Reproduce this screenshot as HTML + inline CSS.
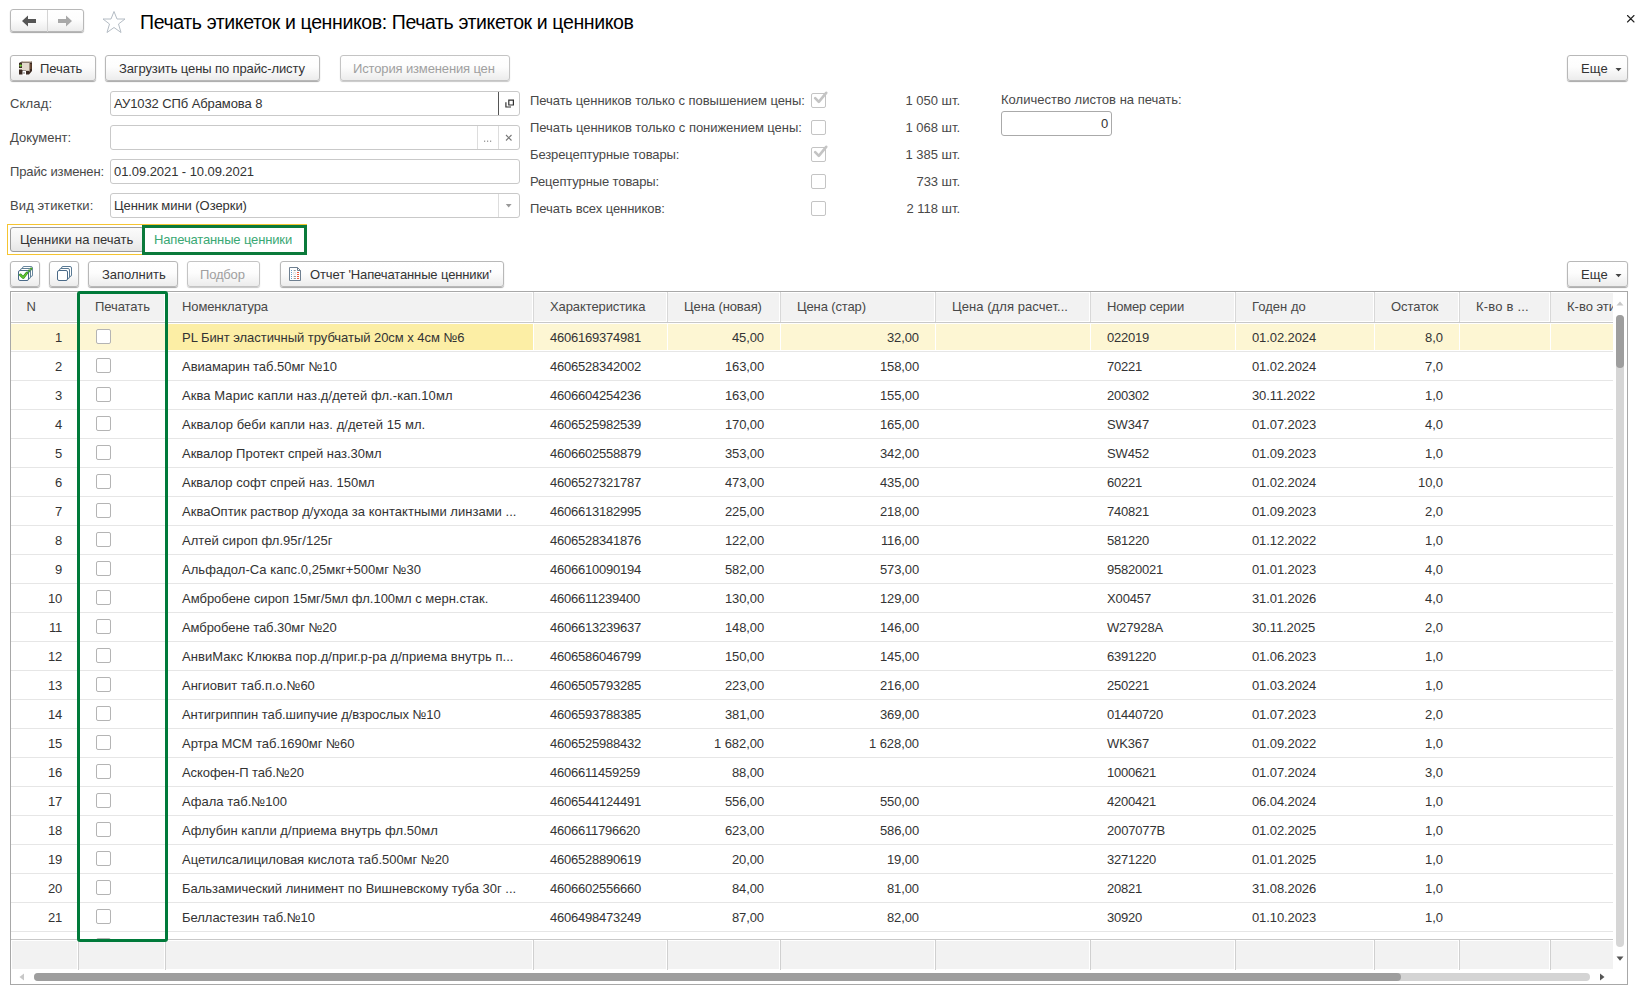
<!DOCTYPE html><html><head><meta charset="utf-8"><style>
html,body{margin:0;padding:0;}
body{width:1635px;height:991px;overflow:hidden;background:#fff;position:relative;font-family:"Liberation Sans",sans-serif;}
.t{position:absolute;white-space:nowrap;}
.b{position:absolute;box-sizing:border-box;}
.btn{position:absolute;box-sizing:border-box;border:1px solid #b8b8b8;border-radius:3px;background:linear-gradient(#ffffff 0%,#fdfdfd 45%,#ececec 100%);box-shadow:0 1px 1px rgba(0,0,0,0.35);}
.dis{border-color:#c4c4c4;box-shadow:0 1px 1px rgba(0,0,0,0.22);}
.inp{position:absolute;box-sizing:border-box;border:1px solid #c9c9c9;border-radius:3px;background:#fff;}
svg{position:absolute;}
</style></head><body>

<div class="btn" style="left:10px;top:9px;width:74px;height:23px"></div>
<div class="b" style="left:47px;top:10px;width:1px;height:22px;background:#d4d4d4"></div>
<svg style="left:20px;top:14px" width="18" height="14" viewBox="0 0 18 14"><path d="M2 7 L8 1.5 L8 5 L16 5 L16 9 L8 9 L8 12.5 Z" fill="#555"/></svg>
<svg style="left:56px;top:14px" width="18" height="14" viewBox="0 0 18 14"><path d="M16 7 L10 1.5 L10 5 L2 5 L2 9 L10 9 L10 12.5 Z" fill="#a8a8a8"/></svg>
<svg style="left:101px;top:10px" width="26" height="24" viewBox="0 0 26 24"><path d="M13 1.5 L16 9 L24 9 L17.5 14 L20 22.5 L13 17.5 L6 22.5 L8.5 14 L2 9 L10 9 Z" fill="none" stroke="#b4bcc4" stroke-width="1" stroke-linejoin="miter"/></svg>
<div class="t" style="left:140px;top:11px;font-size:19.5px;line-height:22px;color:#000;letter-spacing:-0.38px">Печать этикеток и ценников: Печать этикеток и ценников</div>
<svg style="left:1625px;top:13px" width="11" height="11" viewBox="0 0 11 11"><path d="M2.5 2.5 L9 9 M9 2.5 L2.5 9" stroke="#222" stroke-width="1.1" stroke-linecap="round"/></svg>
<div class="btn" style="left:10px;top:55px;width:86px;height:26px"></div>
<svg style="left:18px;top:60px" width="16" height="17" viewBox="0 0 16 17"><path d="M1 3 L4 1.5 L14 1.5 L14 11 L11 14.5 L1 14.5 Z" fill="#3b2a22"/><path d="M3 2.5 L5 1 L13 1 L14 2.5 Z" fill="#cfc4b6"/><rect x="4" y="3" width="7" height="7" fill="#e3d9cc"/><rect x="11" y="2.5" width="1" height="9" fill="#9a8a7a"/><rect x="12" y="4" width="1.5" height="5" fill="#6b4a35"/><circle cx="2.6" cy="5.6" r="1.2" fill="#72d43c"/><rect x="1" y="8" width="3" height="1.5" fill="#efe8dd"/><rect x="4.5" y="10.5" width="3.5" height="5" fill="#fff"/><rect x="5" y="12.5" width="2" height="1" fill="#777"/><rect x="8" y="10" width="3" height="1" fill="#c9bfb2"/></svg>
<div class="t" style="left:40px;top:61px;font-size:13px;line-height:15px;color:#333;letter-spacing:-0.051px;">Печать</div>
<div class="btn" style="left:105px;top:55px;width:215px;height:26px"></div>
<div class="t" style="left:119px;top:61px;font-size:13px;line-height:15px;color:#333;letter-spacing:-0.110px;">Загрузить цены по прайс-листу</div>
<div class="btn dis" style="left:340px;top:55px;width:170px;height:26px"></div>
<div class="t" style="left:353px;top:61px;font-size:13px;line-height:15px;color:#a0a0a0;letter-spacing:-0.139px;">История изменения цен</div>
<div class="btn" style="left:1567px;top:55px;width:61px;height:26px"></div>
<div class="t" style="left:1581px;top:61px;font-size:13px;line-height:15px;color:#333;letter-spacing:0.134px;">Еще</div>
<svg style="left:1615px;top:67px" width="7" height="5" viewBox="0 0 7 5"><path d="M0.5 1 L6.5 1 L3.5 4.2 Z" fill="#444"/></svg>
<div class="t" style="left:10px;top:96px;font-size:13px;line-height:15px;color:#484848;letter-spacing:0.152px;">Склад:</div>
<div class="inp" style="left:110px;top:91px;width:410px;height:25px"></div>
<div class="b" style="left:498px;top:92px;width:1px;height:23px;background:#555"></div>
<div class="t" style="left:114px;top:96px;font-size:13px;line-height:15px;color:#333;letter-spacing:-0.094px;">АУ1032 СПб Абрамова 8</div>
<svg style="left:503px;top:97px" width="14" height="14" viewBox="0 0 14 14"><path d="M5.8 3.1 H10.4 V8 H5.8 Z M2.9 5.2 V10 H8" fill="none" stroke="#333" stroke-width="1.2"/></svg>
<div class="t" style="left:10px;top:130px;font-size:13px;line-height:15px;color:#484848;letter-spacing:-0.015px;">Документ:</div>
<div class="inp" style="left:110px;top:125px;width:410px;height:25px"></div>
<div class="b" style="left:477px;top:126px;width:1px;height:23px;background:#ddd"></div>
<div class="b" style="left:498px;top:126px;width:1px;height:23px;background:#ddd"></div>
<svg style="left:480px;top:136px" width="14" height="8" viewBox="0 0 14 8"><rect x="4" y="4.6" width="1.2" height="1.2" fill="#888"/><rect x="7" y="4.6" width="1.2" height="1.2" fill="#888"/><rect x="10" y="4.6" width="1.2" height="1.2" fill="#888"/></svg>
<svg style="left:503px;top:132px" width="11" height="11" viewBox="0 0 11 11"><path d="M3 3 L8.5 8.5 M8.5 3 L3 8.5" stroke="#777" stroke-width="1.1"/></svg>
<div class="t" style="left:10px;top:164px;font-size:13px;line-height:15px;color:#484848;letter-spacing:-0.126px;">Прайс изменен:</div>
<div class="inp" style="left:110px;top:159px;width:410px;height:25px"></div>
<div class="t" style="left:114px;top:164px;font-size:13px;line-height:15px;color:#333;letter-spacing:-0.073px;">01.09.2021 - 10.09.2021</div>
<div class="t" style="left:10px;top:198px;font-size:13px;line-height:15px;color:#484848;letter-spacing:0.122px;">Вид этикетки:</div>
<div class="inp" style="left:110px;top:193px;width:410px;height:25px"></div>
<div class="b" style="left:498px;top:194px;width:1px;height:23px;background:#ddd"></div>
<div class="t" style="left:114px;top:198px;font-size:13px;line-height:15px;color:#333;letter-spacing:-0.058px;">Ценник мини (Озерки)</div>
<svg style="left:504px;top:203px" width="9" height="6" viewBox="0 0 9 6"><path d="M1.8 1 L7.6 1 L4.7 4.4 Z" fill="#999"/></svg>
<div class="t" style="left:530px;top:93px;font-size:13px;line-height:15px;color:#484848;letter-spacing:-0.050px;">Печать ценников только с повышением цены:</div>
<div class="b" style="left:811px;top:93px;width:15px;height:15px;border:1px solid #c4c4c4;border-radius:2px;background:#fff"></div>
<svg style="left:812px;top:90px" width="16" height="16" viewBox="0 0 16 16"><path d="M3.2 8.2 L6.8 11.8 L14.2 2.8" fill="none" stroke="#c4c4c4" stroke-width="2.6" stroke-linecap="round" stroke-linejoin="round"/></svg>
<div class="t" style="right:675px;top:93px;font-size:13px;line-height:15px;color:#484848;text-align:right;letter-spacing:-0.015px;">1 050 шт.</div>
<div class="t" style="left:530px;top:120px;font-size:13px;line-height:15px;color:#484848;letter-spacing:-0.037px;">Печать ценников только с понижением цены:</div>
<div class="b" style="left:811px;top:120px;width:15px;height:15px;border:1px solid #c4c4c4;border-radius:2px;background:#fff"></div>
<div class="t" style="right:675px;top:120px;font-size:13px;line-height:15px;color:#484848;text-align:right;letter-spacing:-0.015px;">1 068 шт.</div>
<div class="t" style="left:530px;top:147px;font-size:13px;line-height:15px;color:#484848;letter-spacing:-0.111px;">Безрецептурные товары:</div>
<div class="b" style="left:811px;top:147px;width:15px;height:15px;border:1px solid #c4c4c4;border-radius:2px;background:#fff"></div>
<svg style="left:812px;top:144px" width="16" height="16" viewBox="0 0 16 16"><path d="M3.2 8.2 L6.8 11.8 L14.2 2.8" fill="none" stroke="#c4c4c4" stroke-width="2.6" stroke-linecap="round" stroke-linejoin="round"/></svg>
<div class="t" style="right:675px;top:147px;font-size:13px;line-height:15px;color:#484848;text-align:right;letter-spacing:-0.015px;">1 385 шт.</div>
<div class="t" style="left:530px;top:174px;font-size:13px;line-height:15px;color:#484848;letter-spacing:-0.114px;">Рецептурные товары:</div>
<div class="b" style="left:811px;top:174px;width:15px;height:15px;border:1px solid #c4c4c4;border-radius:2px;background:#fff"></div>
<div class="t" style="right:675px;top:174px;font-size:13px;line-height:15px;color:#484848;text-align:right;letter-spacing:-0.042px;">733 шт.</div>
<div class="t" style="left:530px;top:201px;font-size:13px;line-height:15px;color:#484848;letter-spacing:-0.066px;">Печать всех ценников:</div>
<div class="b" style="left:811px;top:201px;width:15px;height:15px;border:1px solid #c4c4c4;border-radius:2px;background:#fff"></div>
<div class="t" style="right:675px;top:201px;font-size:13px;line-height:15px;color:#484848;text-align:right;letter-spacing:-0.015px;">2 118 шт.</div>
<div class="t" style="left:1001px;top:92px;font-size:13px;line-height:15px;color:#484848;letter-spacing:0.017px;">Количество листов на печать:</div>
<div class="inp" style="left:1001px;top:111px;width:111px;height:25px;border-color:#aaa"></div>
<div class="t" style="right:527px;top:116px;font-size:13px;line-height:15px;color:#333;text-align:right;letter-spacing:-0.230px;">0</div>
<div class="b" style="left:7px;top:224px;width:300px;height:31px;border:1px solid #f5c431"></div>
<div class="b" style="left:10px;top:227px;width:134px;height:25px;border:1px solid #9c9c9c;border-radius:3px;background:linear-gradient(#fbfbfb,#f3f3f3 50%,#e6e6e6)"></div>
<div class="t" style="left:20px;top:232px;font-size:13px;line-height:15px;color:#333;letter-spacing:-0.003px;">Ценники на печать</div>
<div class="b" style="left:142px;top:225px;width:165px;height:30px;border:3px solid #0b7a3b;background:#fff"></div>
<div class="t" style="left:154px;top:232px;font-size:13px;line-height:15px;color:#3aa874;letter-spacing:-0.143px;">Напечатанные ценники</div>
<div class="btn" style="left:10px;top:261px;width:30px;height:26px"></div>
<svg style="left:14px;top:262px" width="24" height="24" viewBox="0 0 24 24"><rect x="8.5" y="4.5" width="10" height="10" rx="1.5" fill="#fff" stroke="#6a889e"/><path d="M10.3 8.8 L13.2 11.6 L17.0 6.800000000000001" fill="none" stroke="#2f8f1c" stroke-width="2.6" stroke-linecap="round" stroke-linejoin="round"/><path d="M10.3 8.8 L13.2 11.6 L17.0 6.800000000000001" fill="none" stroke="#6ccc34" stroke-width="1.2" stroke-linecap="round" stroke-linejoin="round"/><rect x="6.5" y="6.5" width="10" height="10" rx="1.5" fill="#fff" stroke="#5f7f96"/><path d="M8.3 10.8 L11.2 13.6 L15.0 8.8" fill="none" stroke="#2f8f1c" stroke-width="2.6" stroke-linecap="round" stroke-linejoin="round"/><path d="M8.3 10.8 L11.2 13.6 L15.0 8.8" fill="none" stroke="#6ccc34" stroke-width="1.2" stroke-linecap="round" stroke-linejoin="round"/><rect x="4.5" y="8.5" width="10" height="10" rx="1.5" fill="#fff" stroke="#4a6a88"/><path d="M6.3 12.8 L9.2 15.6 L13.0 10.8" fill="none" stroke="#2f8f1c" stroke-width="2.6" stroke-linecap="round" stroke-linejoin="round"/><path d="M6.3 12.8 L9.2 15.6 L13.0 10.8" fill="none" stroke="#6ccc34" stroke-width="1.2" stroke-linecap="round" stroke-linejoin="round"/></svg>
<div class="btn" style="left:49px;top:261px;width:30px;height:26px"></div>
<svg style="left:53px;top:262px" width="24" height="24" viewBox="0 0 24 24"><rect x="8.5" y="4.5" width="10" height="10" rx="1.5" fill="#fff" stroke="#5a7a94"/><rect x="6.5" y="6.5" width="10" height="10" rx="1.5" fill="#fff" stroke="#5a7a94"/><rect x="4.5" y="8.5" width="10" height="10" rx="1.5" fill="#fff" stroke="#4a6a88"/></svg>
<div class="btn" style="left:88px;top:261px;width:90px;height:26px"></div>
<div class="t" style="left:102px;top:267px;font-size:13px;line-height:15px;color:#333;letter-spacing:-0.012px;">Заполнить</div>
<div class="btn dis" style="left:187px;top:261px;width:73px;height:26px"></div>
<div class="t" style="left:200px;top:267px;font-size:13px;line-height:15px;color:#a0a0a0;letter-spacing:-0.177px;">Подбор</div>
<div class="btn" style="left:280px;top:261px;width:224px;height:26px"></div>
<svg style="left:284px;top:262px" width="22" height="24" viewBox="0 0 22 24"><path d="M5.5 5.5 H13.5 L16.5 8.5 V18.5 H5.5 Z" fill="#fff" stroke="#6e7f90"/><path d="M13.5 5.5 V8.5 H16.5" fill="none" stroke="#6e7f90"/><g fill="#6aa0c8"><rect x="7" y="8" width="1" height="1"/><rect x="7" y="10" width="1" height="1"/><rect x="7" y="12" width="1" height="1"/><rect x="7" y="14" width="1" height="1"/><rect x="7" y="16" width="1" height="1"/></g><g fill="#999"><rect x="9.7" y="8" width="2" height="1"/><rect x="9.7" y="14" width="2.2" height="1"/><rect x="9.7" y="16" width="2.2" height="1"/></g><circle cx="10.5" cy="11.4" r="1.2" fill="none" stroke="#ccc" stroke-width="0.6"/><g fill="#f05a3c"><rect x="13" y="10" width="2" height="1"/><rect x="13" y="12" width="2" height="1"/><rect x="13" y="14" width="2" height="1"/><rect x="13" y="16" width="2" height="1"/></g></svg>
<div class="t" style="left:310px;top:267px;font-size:13px;line-height:15px;color:#333;letter-spacing:-0.124px;">Отчет 'Напечатанные ценники'</div>
<div class="btn" style="left:1567px;top:261px;width:61px;height:26px"></div>
<div class="t" style="left:1581px;top:267px;font-size:13px;line-height:15px;color:#333;letter-spacing:0.134px;">Еще</div>
<svg style="left:1615px;top:273px" width="7" height="5" viewBox="0 0 7 5"><path d="M0.5 1 L6.5 1 L3.5 4.2 Z" fill="#444"/></svg>
<div class="b" style="left:10px;top:291px;width:1618px;height:694px;border:1px solid #a8a8a8;background:#fff"></div>
<div class="b" style="left:11px;top:292px;width:1602px;height:30px;background:#fff"></div>
<div class="b" style="left:12px;top:293px;width:65px;height:28px;background:#f2f2f2"></div>
<div class="b" style="left:79px;top:293px;width:85px;height:28px;background:#f2f2f2"></div>
<div class="b" style="left:166px;top:293px;width:366px;height:28px;background:#f2f2f2"></div>
<div class="b" style="left:534px;top:293px;width:132px;height:28px;background:#f2f2f2"></div>
<div class="b" style="left:668px;top:293px;width:111px;height:28px;background:#f2f2f2"></div>
<div class="b" style="left:781px;top:293px;width:153px;height:28px;background:#f2f2f2"></div>
<div class="b" style="left:936px;top:293px;width:153px;height:28px;background:#f2f2f2"></div>
<div class="b" style="left:1091px;top:293px;width:143px;height:28px;background:#f2f2f2"></div>
<div class="b" style="left:1236px;top:293px;width:137px;height:28px;background:#f2f2f2"></div>
<div class="b" style="left:1375px;top:293px;width:83px;height:28px;background:#f2f2f2"></div>
<div class="b" style="left:1460px;top:293px;width:89px;height:28px;background:#f2f2f2"></div>
<div class="b" style="left:1551px;top:293px;width:62px;height:28px;background:#f2f2f2"></div>
<div class="b" style="left:11px;top:322px;width:1602px;height:1px;background:#c8c8c8"></div>
<div class="b" style="left:78px;top:292px;width:1px;height:30px;background:#d8d8d8"></div>
<div class="b" style="left:165px;top:292px;width:1px;height:30px;background:#d8d8d8"></div>
<div class="b" style="left:533px;top:292px;width:1px;height:30px;background:#d8d8d8"></div>
<div class="b" style="left:667px;top:292px;width:1px;height:30px;background:#d8d8d8"></div>
<div class="b" style="left:780px;top:292px;width:1px;height:30px;background:#d8d8d8"></div>
<div class="b" style="left:935px;top:292px;width:1px;height:30px;background:#d8d8d8"></div>
<div class="b" style="left:1090px;top:292px;width:1px;height:30px;background:#d8d8d8"></div>
<div class="b" style="left:1235px;top:292px;width:1px;height:30px;background:#d8d8d8"></div>
<div class="b" style="left:1374px;top:292px;width:1px;height:30px;background:#d8d8d8"></div>
<div class="b" style="left:1459px;top:292px;width:1px;height:30px;background:#d8d8d8"></div>
<div class="b" style="left:1550px;top:292px;width:1px;height:30px;background:#d8d8d8"></div>
<div class="t" style="left:-169px;width:400px;text-align:center;top:299px;font-size:13px;line-height:15px;color:#484848;letter-spacing:-0.388px;">N</div>
<div class="t" style="left:95px;top:299px;font-size:13px;line-height:15px;color:#484848;letter-spacing:-0.061px;">Печатать</div>
<div class="t" style="left:182px;top:299px;font-size:13px;line-height:15px;color:#484848;letter-spacing:-0.115px;">Номенклатура</div>
<div class="t" style="left:550px;top:299px;font-size:13px;line-height:15px;color:#484848;letter-spacing:-0.097px;">Характеристика</div>
<div class="t" style="left:684px;top:299px;font-size:13px;line-height:15px;color:#484848;letter-spacing:-0.093px;">Цена (новая)</div>
<div class="t" style="left:797px;top:299px;font-size:13px;line-height:15px;color:#484848;letter-spacing:-0.131px;">Цена (стар)</div>
<div class="t" style="left:952px;top:299px;font-size:13px;line-height:15px;color:#484848;letter-spacing:0.065px;">Цена (для расчет...</div>
<div class="t" style="left:1107px;top:299px;font-size:13px;line-height:15px;color:#484848;letter-spacing:-0.192px;">Номер серии</div>
<div class="t" style="left:1252px;top:299px;font-size:13px;line-height:15px;color:#484848;letter-spacing:0.039px;">Годен до</div>
<div class="t" style="left:1391px;top:299px;font-size:13px;line-height:15px;color:#484848;letter-spacing:-0.095px;">Остаток</div>
<div class="t" style="left:1476px;top:299px;font-size:13px;line-height:15px;color:#484848;letter-spacing:0.200px;">К-во в ...</div>
<div class="t" style="left:1567px;top:299px;width:46px;overflow:hidden;font-size:13px;line-height:15px;color:#484848">К-во этикеток</div>
<div class="b" style="left:11px;top:323px;width:1602px;height:616px;overflow:hidden">
<div class="b" style="left:0;top:1px;width:1602px;height:26px;background:#fdf6d3"></div>
<div class="b" style="left:155px;top:1px;width:367px;height:26px;background:#fceea5"></div>
<div class="b" style="left:67px;top:0px;width:1px;height:28px;background:#fff"></div>
<div class="b" style="left:154px;top:0px;width:1px;height:28px;background:#fff"></div>
<div class="b" style="left:522px;top:0px;width:1px;height:28px;background:#fff"></div>
<div class="b" style="left:656px;top:0px;width:1px;height:28px;background:#fff"></div>
<div class="b" style="left:769px;top:0px;width:1px;height:28px;background:#fff"></div>
<div class="b" style="left:924px;top:0px;width:1px;height:28px;background:#fff"></div>
<div class="b" style="left:1079px;top:0px;width:1px;height:28px;background:#fff"></div>
<div class="b" style="left:1224px;top:0px;width:1px;height:28px;background:#fff"></div>
<div class="b" style="left:1363px;top:0px;width:1px;height:28px;background:#fff"></div>
<div class="b" style="left:1448px;top:0px;width:1px;height:28px;background:#fff"></div>
<div class="b" style="left:1539px;top:0px;width:1px;height:28px;background:#fff"></div>
<div class="b" style="left:0;top:28px;width:1602px;height:1px;background:#e6e6e6"></div>
<div class="b" style="left:85px;top:6px;width:15px;height:15px;border:1px solid #b4b4b4;border-radius:2px;background:#fff"></div>
<div class="b" style="left:0;top:57px;width:1602px;height:1px;background:#e6e6e6"></div>
<div class="b" style="left:85px;top:35px;width:15px;height:15px;border:1px solid #b4b4b4;border-radius:2px;background:#fff"></div>
<div class="b" style="left:0;top:86px;width:1602px;height:1px;background:#e6e6e6"></div>
<div class="b" style="left:85px;top:64px;width:15px;height:15px;border:1px solid #b4b4b4;border-radius:2px;background:#fff"></div>
<div class="b" style="left:0;top:115px;width:1602px;height:1px;background:#e6e6e6"></div>
<div class="b" style="left:85px;top:93px;width:15px;height:15px;border:1px solid #b4b4b4;border-radius:2px;background:#fff"></div>
<div class="b" style="left:0;top:144px;width:1602px;height:1px;background:#e6e6e6"></div>
<div class="b" style="left:85px;top:122px;width:15px;height:15px;border:1px solid #b4b4b4;border-radius:2px;background:#fff"></div>
<div class="b" style="left:0;top:173px;width:1602px;height:1px;background:#e6e6e6"></div>
<div class="b" style="left:85px;top:151px;width:15px;height:15px;border:1px solid #b4b4b4;border-radius:2px;background:#fff"></div>
<div class="b" style="left:0;top:202px;width:1602px;height:1px;background:#e6e6e6"></div>
<div class="b" style="left:85px;top:180px;width:15px;height:15px;border:1px solid #b4b4b4;border-radius:2px;background:#fff"></div>
<div class="b" style="left:0;top:231px;width:1602px;height:1px;background:#e6e6e6"></div>
<div class="b" style="left:85px;top:209px;width:15px;height:15px;border:1px solid #b4b4b4;border-radius:2px;background:#fff"></div>
<div class="b" style="left:0;top:260px;width:1602px;height:1px;background:#e6e6e6"></div>
<div class="b" style="left:85px;top:238px;width:15px;height:15px;border:1px solid #b4b4b4;border-radius:2px;background:#fff"></div>
<div class="b" style="left:0;top:289px;width:1602px;height:1px;background:#e6e6e6"></div>
<div class="b" style="left:85px;top:267px;width:15px;height:15px;border:1px solid #b4b4b4;border-radius:2px;background:#fff"></div>
<div class="b" style="left:0;top:318px;width:1602px;height:1px;background:#e6e6e6"></div>
<div class="b" style="left:85px;top:296px;width:15px;height:15px;border:1px solid #b4b4b4;border-radius:2px;background:#fff"></div>
<div class="b" style="left:0;top:347px;width:1602px;height:1px;background:#e6e6e6"></div>
<div class="b" style="left:85px;top:325px;width:15px;height:15px;border:1px solid #b4b4b4;border-radius:2px;background:#fff"></div>
<div class="b" style="left:0;top:376px;width:1602px;height:1px;background:#e6e6e6"></div>
<div class="b" style="left:85px;top:354px;width:15px;height:15px;border:1px solid #b4b4b4;border-radius:2px;background:#fff"></div>
<div class="b" style="left:0;top:405px;width:1602px;height:1px;background:#e6e6e6"></div>
<div class="b" style="left:85px;top:383px;width:15px;height:15px;border:1px solid #b4b4b4;border-radius:2px;background:#fff"></div>
<div class="b" style="left:0;top:434px;width:1602px;height:1px;background:#e6e6e6"></div>
<div class="b" style="left:85px;top:412px;width:15px;height:15px;border:1px solid #b4b4b4;border-radius:2px;background:#fff"></div>
<div class="b" style="left:0;top:463px;width:1602px;height:1px;background:#e6e6e6"></div>
<div class="b" style="left:85px;top:441px;width:15px;height:15px;border:1px solid #b4b4b4;border-radius:2px;background:#fff"></div>
<div class="b" style="left:0;top:492px;width:1602px;height:1px;background:#e6e6e6"></div>
<div class="b" style="left:85px;top:470px;width:15px;height:15px;border:1px solid #b4b4b4;border-radius:2px;background:#fff"></div>
<div class="b" style="left:0;top:521px;width:1602px;height:1px;background:#e6e6e6"></div>
<div class="b" style="left:85px;top:499px;width:15px;height:15px;border:1px solid #b4b4b4;border-radius:2px;background:#fff"></div>
<div class="b" style="left:0;top:550px;width:1602px;height:1px;background:#e6e6e6"></div>
<div class="b" style="left:85px;top:528px;width:15px;height:15px;border:1px solid #b4b4b4;border-radius:2px;background:#fff"></div>
<div class="b" style="left:0;top:579px;width:1602px;height:1px;background:#e6e6e6"></div>
<div class="b" style="left:85px;top:557px;width:15px;height:15px;border:1px solid #b4b4b4;border-radius:2px;background:#fff"></div>
<div class="b" style="left:0;top:608px;width:1602px;height:1px;background:#e6e6e6"></div>
<div class="b" style="left:85px;top:586px;width:15px;height:15px;border:1px solid #b4b4b4;border-radius:2px;background:#fff"></div>
<div class="b" style="left:0;top:637px;width:1602px;height:1px;background:#e6e6e6"></div>
<div class="b" style="left:85px;top:615px;width:15px;height:15px;border:1px solid #b4b4b4;border-radius:2px;background:#fff"></div>
</div>
<div class="t" style="right:1573px;top:330px;font-size:13px;line-height:15px;color:#333;text-align:right;letter-spacing:-0.230px;">1</div>
<div class="t" style="left:182px;top:330px;font-size:13px;line-height:15px;color:#333;letter-spacing:-0.042px;">PL Бинт эластичный трубчатый 20см х 4см №6</div>
<div class="t" style="left:550px;top:330px;font-size:13px;line-height:15px;color:#333;letter-spacing:-0.230px;">4606169374981</div>
<div class="t" style="right:871px;top:330px;font-size:13px;line-height:15px;color:#333;text-align:right;letter-spacing:-0.106px;">45,00</div>
<div class="t" style="right:716px;top:330px;font-size:13px;line-height:15px;color:#333;text-align:right;letter-spacing:-0.106px;">32,00</div>
<div class="t" style="left:1107px;top:330px;font-size:13px;line-height:15px;color:#333;letter-spacing:-0.230px;">022019</div>
<div class="t" style="left:1252px;top:330px;font-size:13px;line-height:15px;color:#333;letter-spacing:-0.106px;">01.02.2024</div>
<div class="t" style="right:192px;top:330px;font-size:13px;line-height:15px;color:#333;text-align:right;letter-spacing:-0.024px;">8,0</div>
<div class="t" style="right:1573px;top:359px;font-size:13px;line-height:15px;color:#333;text-align:right;letter-spacing:-0.230px;">2</div>
<div class="t" style="left:182px;top:359px;font-size:13px;line-height:15px;color:#333;letter-spacing:-0.042px;">Авиамарин таб.50мг №10</div>
<div class="t" style="left:550px;top:359px;font-size:13px;line-height:15px;color:#333;letter-spacing:-0.230px;">4606528342002</div>
<div class="t" style="right:871px;top:359px;font-size:13px;line-height:15px;color:#333;text-align:right;letter-spacing:-0.127px;">163,00</div>
<div class="t" style="right:716px;top:359px;font-size:13px;line-height:15px;color:#333;text-align:right;letter-spacing:-0.127px;">158,00</div>
<div class="t" style="left:1107px;top:359px;font-size:13px;line-height:15px;color:#333;letter-spacing:-0.230px;">70221</div>
<div class="t" style="left:1252px;top:359px;font-size:13px;line-height:15px;color:#333;letter-spacing:-0.106px;">01.02.2024</div>
<div class="t" style="right:192px;top:359px;font-size:13px;line-height:15px;color:#333;text-align:right;letter-spacing:-0.024px;">7,0</div>
<div class="t" style="right:1573px;top:388px;font-size:13px;line-height:15px;color:#333;text-align:right;letter-spacing:-0.230px;">3</div>
<div class="t" style="left:182px;top:388px;font-size:13px;line-height:15px;color:#333;letter-spacing:0.073px;">Аква Марис капли наз.д/детей фл.-кап.10мл</div>
<div class="t" style="left:550px;top:388px;font-size:13px;line-height:15px;color:#333;letter-spacing:-0.230px;">4606604254236</div>
<div class="t" style="right:871px;top:388px;font-size:13px;line-height:15px;color:#333;text-align:right;letter-spacing:-0.127px;">163,00</div>
<div class="t" style="right:716px;top:388px;font-size:13px;line-height:15px;color:#333;text-align:right;letter-spacing:-0.127px;">155,00</div>
<div class="t" style="left:1107px;top:388px;font-size:13px;line-height:15px;color:#333;letter-spacing:-0.230px;">200302</div>
<div class="t" style="left:1252px;top:388px;font-size:13px;line-height:15px;color:#333;letter-spacing:-0.106px;">30.11.2022</div>
<div class="t" style="right:192px;top:388px;font-size:13px;line-height:15px;color:#333;text-align:right;letter-spacing:-0.024px;">1,0</div>
<div class="t" style="right:1573px;top:417px;font-size:13px;line-height:15px;color:#333;text-align:right;letter-spacing:-0.230px;">4</div>
<div class="t" style="left:182px;top:417px;font-size:13px;line-height:15px;color:#333;letter-spacing:0.068px;">Аквалор беби капли наз. д/детей 15 мл.</div>
<div class="t" style="left:550px;top:417px;font-size:13px;line-height:15px;color:#333;letter-spacing:-0.230px;">4606525982539</div>
<div class="t" style="right:871px;top:417px;font-size:13px;line-height:15px;color:#333;text-align:right;letter-spacing:-0.127px;">170,00</div>
<div class="t" style="right:716px;top:417px;font-size:13px;line-height:15px;color:#333;text-align:right;letter-spacing:-0.127px;">165,00</div>
<div class="t" style="left:1107px;top:417px;font-size:13px;line-height:15px;color:#333;letter-spacing:-0.126px;">SW347</div>
<div class="t" style="left:1252px;top:417px;font-size:13px;line-height:15px;color:#333;letter-spacing:-0.106px;">01.07.2023</div>
<div class="t" style="right:192px;top:417px;font-size:13px;line-height:15px;color:#333;text-align:right;letter-spacing:-0.024px;">4,0</div>
<div class="t" style="right:1573px;top:446px;font-size:13px;line-height:15px;color:#333;text-align:right;letter-spacing:-0.230px;">5</div>
<div class="t" style="left:182px;top:446px;font-size:13px;line-height:15px;color:#333;letter-spacing:-0.008px;">Аквалор Протект спрей наз.30мл</div>
<div class="t" style="left:550px;top:446px;font-size:13px;line-height:15px;color:#333;letter-spacing:-0.230px;">4606602558879</div>
<div class="t" style="right:871px;top:446px;font-size:13px;line-height:15px;color:#333;text-align:right;letter-spacing:-0.127px;">353,00</div>
<div class="t" style="right:716px;top:446px;font-size:13px;line-height:15px;color:#333;text-align:right;letter-spacing:-0.127px;">342,00</div>
<div class="t" style="left:1107px;top:446px;font-size:13px;line-height:15px;color:#333;letter-spacing:-0.126px;">SW452</div>
<div class="t" style="left:1252px;top:446px;font-size:13px;line-height:15px;color:#333;letter-spacing:-0.106px;">01.09.2023</div>
<div class="t" style="right:192px;top:446px;font-size:13px;line-height:15px;color:#333;text-align:right;letter-spacing:-0.024px;">1,0</div>
<div class="t" style="right:1573px;top:475px;font-size:13px;line-height:15px;color:#333;text-align:right;letter-spacing:-0.230px;">6</div>
<div class="t" style="left:182px;top:475px;font-size:13px;line-height:15px;color:#333;letter-spacing:0.006px;">Аквалор софт спрей наз. 150мл</div>
<div class="t" style="left:550px;top:475px;font-size:13px;line-height:15px;color:#333;letter-spacing:-0.230px;">4606527321787</div>
<div class="t" style="right:871px;top:475px;font-size:13px;line-height:15px;color:#333;text-align:right;letter-spacing:-0.127px;">473,00</div>
<div class="t" style="right:716px;top:475px;font-size:13px;line-height:15px;color:#333;text-align:right;letter-spacing:-0.127px;">435,00</div>
<div class="t" style="left:1107px;top:475px;font-size:13px;line-height:15px;color:#333;letter-spacing:-0.230px;">60221</div>
<div class="t" style="left:1252px;top:475px;font-size:13px;line-height:15px;color:#333;letter-spacing:-0.106px;">01.02.2024</div>
<div class="t" style="right:192px;top:475px;font-size:13px;line-height:15px;color:#333;text-align:right;letter-spacing:-0.075px;">10,0</div>
<div class="t" style="right:1573px;top:504px;font-size:13px;line-height:15px;color:#333;text-align:right;letter-spacing:-0.230px;">7</div>
<div class="t" style="left:182px;top:504px;font-size:13px;line-height:15px;color:#333;letter-spacing:0.023px;">АкваОптик раствор д/ухода за контактными линзами ...</div>
<div class="t" style="left:550px;top:504px;font-size:13px;line-height:15px;color:#333;letter-spacing:-0.230px;">4606613182995</div>
<div class="t" style="right:871px;top:504px;font-size:13px;line-height:15px;color:#333;text-align:right;letter-spacing:-0.127px;">225,00</div>
<div class="t" style="right:716px;top:504px;font-size:13px;line-height:15px;color:#333;text-align:right;letter-spacing:-0.127px;">218,00</div>
<div class="t" style="left:1107px;top:504px;font-size:13px;line-height:15px;color:#333;letter-spacing:-0.230px;">740821</div>
<div class="t" style="left:1252px;top:504px;font-size:13px;line-height:15px;color:#333;letter-spacing:-0.106px;">01.09.2023</div>
<div class="t" style="right:192px;top:504px;font-size:13px;line-height:15px;color:#333;text-align:right;letter-spacing:-0.024px;">2,0</div>
<div class="t" style="right:1573px;top:533px;font-size:13px;line-height:15px;color:#333;text-align:right;letter-spacing:-0.230px;">8</div>
<div class="t" style="left:182px;top:533px;font-size:13px;line-height:15px;color:#333;letter-spacing:0.029px;">Алтей сироп фл.95г/125г</div>
<div class="t" style="left:550px;top:533px;font-size:13px;line-height:15px;color:#333;letter-spacing:-0.230px;">4606528341876</div>
<div class="t" style="right:871px;top:533px;font-size:13px;line-height:15px;color:#333;text-align:right;letter-spacing:-0.127px;">122,00</div>
<div class="t" style="right:716px;top:533px;font-size:13px;line-height:15px;color:#333;text-align:right;letter-spacing:-0.127px;">116,00</div>
<div class="t" style="left:1107px;top:533px;font-size:13px;line-height:15px;color:#333;letter-spacing:-0.230px;">581220</div>
<div class="t" style="left:1252px;top:533px;font-size:13px;line-height:15px;color:#333;letter-spacing:-0.106px;">01.12.2022</div>
<div class="t" style="right:192px;top:533px;font-size:13px;line-height:15px;color:#333;text-align:right;letter-spacing:-0.024px;">1,0</div>
<div class="t" style="right:1573px;top:562px;font-size:13px;line-height:15px;color:#333;text-align:right;letter-spacing:-0.230px;">9</div>
<div class="t" style="left:182px;top:562px;font-size:13px;line-height:15px;color:#333;letter-spacing:0.040px;">Альфадол-Са капс.0,25мкг+500мг №30</div>
<div class="t" style="left:550px;top:562px;font-size:13px;line-height:15px;color:#333;letter-spacing:-0.230px;">4606610090194</div>
<div class="t" style="right:871px;top:562px;font-size:13px;line-height:15px;color:#333;text-align:right;letter-spacing:-0.127px;">582,00</div>
<div class="t" style="right:716px;top:562px;font-size:13px;line-height:15px;color:#333;text-align:right;letter-spacing:-0.127px;">573,00</div>
<div class="t" style="left:1107px;top:562px;font-size:13px;line-height:15px;color:#333;letter-spacing:-0.230px;">95820021</div>
<div class="t" style="left:1252px;top:562px;font-size:13px;line-height:15px;color:#333;letter-spacing:-0.106px;">01.01.2023</div>
<div class="t" style="right:192px;top:562px;font-size:13px;line-height:15px;color:#333;text-align:right;letter-spacing:-0.024px;">4,0</div>
<div class="t" style="right:1573px;top:591px;font-size:13px;line-height:15px;color:#333;text-align:right;letter-spacing:-0.230px;">10</div>
<div class="t" style="left:182px;top:591px;font-size:13px;line-height:15px;color:#333;letter-spacing:-0.004px;">Амбробене сироп 15мг/5мл фл.100мл с мерн.стак.</div>
<div class="t" style="left:550px;top:591px;font-size:13px;line-height:15px;color:#333;letter-spacing:-0.230px;">4606611239400</div>
<div class="t" style="right:871px;top:591px;font-size:13px;line-height:15px;color:#333;text-align:right;letter-spacing:-0.127px;">130,00</div>
<div class="t" style="right:716px;top:591px;font-size:13px;line-height:15px;color:#333;text-align:right;letter-spacing:-0.127px;">129,00</div>
<div class="t" style="left:1107px;top:591px;font-size:13px;line-height:15px;color:#333;letter-spacing:-0.137px;">X00457</div>
<div class="t" style="left:1252px;top:591px;font-size:13px;line-height:15px;color:#333;letter-spacing:-0.106px;">31.01.2026</div>
<div class="t" style="right:192px;top:591px;font-size:13px;line-height:15px;color:#333;text-align:right;letter-spacing:-0.024px;">4,0</div>
<div class="t" style="right:1573px;top:620px;font-size:13px;line-height:15px;color:#333;text-align:right;letter-spacing:-0.230px;">11</div>
<div class="t" style="left:182px;top:620px;font-size:13px;line-height:15px;color:#333;letter-spacing:-0.073px;">Амбробене таб.30мг №20</div>
<div class="t" style="left:550px;top:620px;font-size:13px;line-height:15px;color:#333;letter-spacing:-0.230px;">4606613239637</div>
<div class="t" style="right:871px;top:620px;font-size:13px;line-height:15px;color:#333;text-align:right;letter-spacing:-0.127px;">148,00</div>
<div class="t" style="right:716px;top:620px;font-size:13px;line-height:15px;color:#333;text-align:right;letter-spacing:-0.127px;">146,00</div>
<div class="t" style="left:1107px;top:620px;font-size:13px;line-height:15px;color:#333;letter-spacing:-0.156px;">W27928A</div>
<div class="t" style="left:1252px;top:620px;font-size:13px;line-height:15px;color:#333;letter-spacing:-0.106px;">30.11.2025</div>
<div class="t" style="right:192px;top:620px;font-size:13px;line-height:15px;color:#333;text-align:right;letter-spacing:-0.024px;">2,0</div>
<div class="t" style="right:1573px;top:649px;font-size:13px;line-height:15px;color:#333;text-align:right;letter-spacing:-0.230px;">12</div>
<div class="t" style="left:182px;top:649px;font-size:13px;line-height:15px;color:#333;letter-spacing:0.061px;">АнвиМакс Клюква пор.д/приг.р-ра д/приема внутрь п...</div>
<div class="t" style="left:550px;top:649px;font-size:13px;line-height:15px;color:#333;letter-spacing:-0.230px;">4606586046799</div>
<div class="t" style="right:871px;top:649px;font-size:13px;line-height:15px;color:#333;text-align:right;letter-spacing:-0.127px;">150,00</div>
<div class="t" style="right:716px;top:649px;font-size:13px;line-height:15px;color:#333;text-align:right;letter-spacing:-0.127px;">145,00</div>
<div class="t" style="left:1107px;top:649px;font-size:13px;line-height:15px;color:#333;letter-spacing:-0.230px;">6391220</div>
<div class="t" style="left:1252px;top:649px;font-size:13px;line-height:15px;color:#333;letter-spacing:-0.106px;">01.06.2023</div>
<div class="t" style="right:192px;top:649px;font-size:13px;line-height:15px;color:#333;text-align:right;letter-spacing:-0.024px;">1,0</div>
<div class="t" style="right:1573px;top:678px;font-size:13px;line-height:15px;color:#333;text-align:right;letter-spacing:-0.230px;">13</div>
<div class="t" style="left:182px;top:678px;font-size:13px;line-height:15px;color:#333;letter-spacing:0.002px;">Ангиовит таб.п.о.№60</div>
<div class="t" style="left:550px;top:678px;font-size:13px;line-height:15px;color:#333;letter-spacing:-0.230px;">4606505793285</div>
<div class="t" style="right:871px;top:678px;font-size:13px;line-height:15px;color:#333;text-align:right;letter-spacing:-0.127px;">223,00</div>
<div class="t" style="right:716px;top:678px;font-size:13px;line-height:15px;color:#333;text-align:right;letter-spacing:-0.127px;">216,00</div>
<div class="t" style="left:1107px;top:678px;font-size:13px;line-height:15px;color:#333;letter-spacing:-0.230px;">250221</div>
<div class="t" style="left:1252px;top:678px;font-size:13px;line-height:15px;color:#333;letter-spacing:-0.106px;">01.03.2024</div>
<div class="t" style="right:192px;top:678px;font-size:13px;line-height:15px;color:#333;text-align:right;letter-spacing:-0.024px;">1,0</div>
<div class="t" style="right:1573px;top:707px;font-size:13px;line-height:15px;color:#333;text-align:right;letter-spacing:-0.230px;">14</div>
<div class="t" style="left:182px;top:707px;font-size:13px;line-height:15px;color:#333;letter-spacing:-0.059px;">Антигриппин таб.шипучие д/взрослых №10</div>
<div class="t" style="left:550px;top:707px;font-size:13px;line-height:15px;color:#333;letter-spacing:-0.230px;">4606593788385</div>
<div class="t" style="right:871px;top:707px;font-size:13px;line-height:15px;color:#333;text-align:right;letter-spacing:-0.127px;">381,00</div>
<div class="t" style="right:716px;top:707px;font-size:13px;line-height:15px;color:#333;text-align:right;letter-spacing:-0.127px;">369,00</div>
<div class="t" style="left:1107px;top:707px;font-size:13px;line-height:15px;color:#333;letter-spacing:-0.230px;">01440720</div>
<div class="t" style="left:1252px;top:707px;font-size:13px;line-height:15px;color:#333;letter-spacing:-0.106px;">01.07.2023</div>
<div class="t" style="right:192px;top:707px;font-size:13px;line-height:15px;color:#333;text-align:right;letter-spacing:-0.024px;">2,0</div>
<div class="t" style="right:1573px;top:736px;font-size:13px;line-height:15px;color:#333;text-align:right;letter-spacing:-0.230px;">15</div>
<div class="t" style="left:182px;top:736px;font-size:13px;line-height:15px;color:#333;letter-spacing:-0.018px;">Артра МСМ таб.1690мг №60</div>
<div class="t" style="left:550px;top:736px;font-size:13px;line-height:15px;color:#333;letter-spacing:-0.230px;">4606525988432</div>
<div class="t" style="right:871px;top:736px;font-size:13px;line-height:15px;color:#333;text-align:right;letter-spacing:-0.075px;">1 682,00</div>
<div class="t" style="right:716px;top:736px;font-size:13px;line-height:15px;color:#333;text-align:right;letter-spacing:-0.075px;">1 628,00</div>
<div class="t" style="left:1107px;top:736px;font-size:13px;line-height:15px;color:#333;letter-spacing:-0.126px;">WK367</div>
<div class="t" style="left:1252px;top:736px;font-size:13px;line-height:15px;color:#333;letter-spacing:-0.106px;">01.09.2022</div>
<div class="t" style="right:192px;top:736px;font-size:13px;line-height:15px;color:#333;text-align:right;letter-spacing:-0.024px;">1,0</div>
<div class="t" style="right:1573px;top:765px;font-size:13px;line-height:15px;color:#333;text-align:right;letter-spacing:-0.230px;">16</div>
<div class="t" style="left:182px;top:765px;font-size:13px;line-height:15px;color:#333;letter-spacing:-0.066px;">Аскофен-П таб.№20</div>
<div class="t" style="left:550px;top:765px;font-size:13px;line-height:15px;color:#333;letter-spacing:-0.230px;">4606611459259</div>
<div class="t" style="right:871px;top:765px;font-size:13px;line-height:15px;color:#333;text-align:right;letter-spacing:-0.106px;">88,00</div>
<div class="t" style="left:1107px;top:765px;font-size:13px;line-height:15px;color:#333;letter-spacing:-0.230px;">1000621</div>
<div class="t" style="left:1252px;top:765px;font-size:13px;line-height:15px;color:#333;letter-spacing:-0.106px;">01.07.2024</div>
<div class="t" style="right:192px;top:765px;font-size:13px;line-height:15px;color:#333;text-align:right;letter-spacing:-0.024px;">3,0</div>
<div class="t" style="right:1573px;top:794px;font-size:13px;line-height:15px;color:#333;text-align:right;letter-spacing:-0.230px;">17</div>
<div class="t" style="left:182px;top:794px;font-size:13px;line-height:15px;color:#333;letter-spacing:0.007px;">Афала таб.№100</div>
<div class="t" style="left:550px;top:794px;font-size:13px;line-height:15px;color:#333;letter-spacing:-0.230px;">4606544124491</div>
<div class="t" style="right:871px;top:794px;font-size:13px;line-height:15px;color:#333;text-align:right;letter-spacing:-0.127px;">556,00</div>
<div class="t" style="right:716px;top:794px;font-size:13px;line-height:15px;color:#333;text-align:right;letter-spacing:-0.127px;">550,00</div>
<div class="t" style="left:1107px;top:794px;font-size:13px;line-height:15px;color:#333;letter-spacing:-0.230px;">4200421</div>
<div class="t" style="left:1252px;top:794px;font-size:13px;line-height:15px;color:#333;letter-spacing:-0.106px;">06.04.2024</div>
<div class="t" style="right:192px;top:794px;font-size:13px;line-height:15px;color:#333;text-align:right;letter-spacing:-0.024px;">1,0</div>
<div class="t" style="right:1573px;top:823px;font-size:13px;line-height:15px;color:#333;text-align:right;letter-spacing:-0.230px;">18</div>
<div class="t" style="left:182px;top:823px;font-size:13px;line-height:15px;color:#333;letter-spacing:0.050px;">Афлубин капли д/приема внутрь фл.50мл</div>
<div class="t" style="left:550px;top:823px;font-size:13px;line-height:15px;color:#333;letter-spacing:-0.230px;">4606611796620</div>
<div class="t" style="right:871px;top:823px;font-size:13px;line-height:15px;color:#333;text-align:right;letter-spacing:-0.127px;">623,00</div>
<div class="t" style="right:716px;top:823px;font-size:13px;line-height:15px;color:#333;text-align:right;letter-spacing:-0.127px;">586,00</div>
<div class="t" style="left:1107px;top:823px;font-size:13px;line-height:15px;color:#333;letter-spacing:-0.160px;">2007077B</div>
<div class="t" style="left:1252px;top:823px;font-size:13px;line-height:15px;color:#333;letter-spacing:-0.106px;">01.02.2025</div>
<div class="t" style="right:192px;top:823px;font-size:13px;line-height:15px;color:#333;text-align:right;letter-spacing:-0.024px;">1,0</div>
<div class="t" style="right:1573px;top:852px;font-size:13px;line-height:15px;color:#333;text-align:right;letter-spacing:-0.230px;">19</div>
<div class="t" style="left:182px;top:852px;font-size:13px;line-height:15px;color:#333;letter-spacing:-0.044px;">Ацетилсалициловая кислота таб.500мг №20</div>
<div class="t" style="left:550px;top:852px;font-size:13px;line-height:15px;color:#333;letter-spacing:-0.230px;">4606528890619</div>
<div class="t" style="right:871px;top:852px;font-size:13px;line-height:15px;color:#333;text-align:right;letter-spacing:-0.106px;">20,00</div>
<div class="t" style="right:716px;top:852px;font-size:13px;line-height:15px;color:#333;text-align:right;letter-spacing:-0.106px;">19,00</div>
<div class="t" style="left:1107px;top:852px;font-size:13px;line-height:15px;color:#333;letter-spacing:-0.230px;">3271220</div>
<div class="t" style="left:1252px;top:852px;font-size:13px;line-height:15px;color:#333;letter-spacing:-0.106px;">01.01.2025</div>
<div class="t" style="right:192px;top:852px;font-size:13px;line-height:15px;color:#333;text-align:right;letter-spacing:-0.024px;">1,0</div>
<div class="t" style="right:1573px;top:881px;font-size:13px;line-height:15px;color:#333;text-align:right;letter-spacing:-0.230px;">20</div>
<div class="t" style="left:182px;top:881px;font-size:13px;line-height:15px;color:#333;letter-spacing:-0.009px;">Бальзамический линимент по Вишневскому туба 30г ...</div>
<div class="t" style="left:550px;top:881px;font-size:13px;line-height:15px;color:#333;letter-spacing:-0.230px;">4606602556660</div>
<div class="t" style="right:871px;top:881px;font-size:13px;line-height:15px;color:#333;text-align:right;letter-spacing:-0.106px;">84,00</div>
<div class="t" style="right:716px;top:881px;font-size:13px;line-height:15px;color:#333;text-align:right;letter-spacing:-0.106px;">81,00</div>
<div class="t" style="left:1107px;top:881px;font-size:13px;line-height:15px;color:#333;letter-spacing:-0.230px;">20821</div>
<div class="t" style="left:1252px;top:881px;font-size:13px;line-height:15px;color:#333;letter-spacing:-0.106px;">31.08.2026</div>
<div class="t" style="right:192px;top:881px;font-size:13px;line-height:15px;color:#333;text-align:right;letter-spacing:-0.024px;">1,0</div>
<div class="t" style="right:1573px;top:910px;font-size:13px;line-height:15px;color:#333;text-align:right;letter-spacing:-0.230px;">21</div>
<div class="t" style="left:182px;top:910px;font-size:13px;line-height:15px;color:#333;letter-spacing:-0.027px;">Белластезин таб.№10</div>
<div class="t" style="left:550px;top:910px;font-size:13px;line-height:15px;color:#333;letter-spacing:-0.230px;">4606498473249</div>
<div class="t" style="right:871px;top:910px;font-size:13px;line-height:15px;color:#333;text-align:right;letter-spacing:-0.106px;">87,00</div>
<div class="t" style="right:716px;top:910px;font-size:13px;line-height:15px;color:#333;text-align:right;letter-spacing:-0.106px;">82,00</div>
<div class="t" style="left:1107px;top:910px;font-size:13px;line-height:15px;color:#333;letter-spacing:-0.230px;">30920</div>
<div class="t" style="left:1252px;top:910px;font-size:13px;line-height:15px;color:#333;letter-spacing:-0.106px;">01.10.2023</div>
<div class="t" style="right:192px;top:910px;font-size:13px;line-height:15px;color:#333;text-align:right;letter-spacing:-0.024px;">1,0</div>
<div class="b" style="left:11px;top:939px;width:1602px;height:1px;background:#c8c8c8"></div>
<div class="b" style="left:11px;top:940px;width:1602px;height:29px;background:#fff"></div>
<div class="b" style="left:12px;top:941px;width:65px;height:28px;background:#f2f2f2"></div>
<div class="b" style="left:79px;top:941px;width:85px;height:28px;background:#f2f2f2"></div>
<div class="b" style="left:166px;top:941px;width:366px;height:28px;background:#f2f2f2"></div>
<div class="b" style="left:534px;top:941px;width:132px;height:28px;background:#f2f2f2"></div>
<div class="b" style="left:668px;top:941px;width:111px;height:28px;background:#f2f2f2"></div>
<div class="b" style="left:781px;top:941px;width:153px;height:28px;background:#f2f2f2"></div>
<div class="b" style="left:936px;top:941px;width:153px;height:28px;background:#f2f2f2"></div>
<div class="b" style="left:1091px;top:941px;width:143px;height:28px;background:#f2f2f2"></div>
<div class="b" style="left:1236px;top:941px;width:137px;height:28px;background:#f2f2f2"></div>
<div class="b" style="left:1375px;top:941px;width:83px;height:28px;background:#f2f2f2"></div>
<div class="b" style="left:1460px;top:941px;width:89px;height:28px;background:#f2f2f2"></div>
<div class="b" style="left:1551px;top:941px;width:62px;height:28px;background:#f2f2f2"></div>
<div class="b" style="left:78px;top:940px;width:1px;height:30px;background:#d0d0d0"></div>
<div class="b" style="left:165px;top:940px;width:1px;height:30px;background:#d0d0d0"></div>
<div class="b" style="left:533px;top:940px;width:1px;height:30px;background:#d0d0d0"></div>
<div class="b" style="left:667px;top:940px;width:1px;height:30px;background:#d0d0d0"></div>
<div class="b" style="left:780px;top:940px;width:1px;height:30px;background:#d0d0d0"></div>
<div class="b" style="left:935px;top:940px;width:1px;height:30px;background:#d0d0d0"></div>
<div class="b" style="left:1090px;top:940px;width:1px;height:30px;background:#d0d0d0"></div>
<div class="b" style="left:1235px;top:940px;width:1px;height:30px;background:#d0d0d0"></div>
<div class="b" style="left:1374px;top:940px;width:1px;height:30px;background:#d0d0d0"></div>
<div class="b" style="left:1459px;top:940px;width:1px;height:30px;background:#d0d0d0"></div>
<div class="b" style="left:1550px;top:940px;width:1px;height:30px;background:#d0d0d0"></div>
<div class="b" style="left:77px;top:291px;width:91px;height:651px;border:3px solid #007a3a;border-radius:3px"></div>
<svg style="left:1616px;top:300px" width="8" height="6" viewBox="0 0 8 6"><path d="M0.5 5.5 L7.5 5.5 L4 1.5 Z" fill="#c8c8c8"/></svg>
<div class="b" style="left:1616px;top:315px;width:8px;height:632px;background:#d6d6d6;border-radius:4px"></div>
<div class="b" style="left:1616px;top:315px;width:8px;height:53px;background:#9e9e9e;border-radius:4px"></div>
<svg style="left:1616px;top:956px" width="8" height="6" viewBox="0 0 8 6"><path d="M0.5 0.5 L7.5 0.5 L4 4.8 Z" fill="#555"/></svg>
<svg style="left:18px;top:973px" width="7" height="8" viewBox="0 0 7 8"><path d="M6 0.5 L6 7.5 L1.5 4 Z" fill="#c8c8c8"/></svg>
<div class="b" style="left:34px;top:973px;width:1556px;height:8px;background:#d4d4d4;border-radius:4px"></div>
<div class="b" style="left:34px;top:973px;width:1367px;height:8px;background:#9e9e9e;border-radius:4px"></div>
<svg style="left:1599px;top:973px" width="7" height="8" viewBox="0 0 7 8"><path d="M1 0.5 L1 7.5 L5.5 4 Z" fill="#555"/></svg>
</body></html>
